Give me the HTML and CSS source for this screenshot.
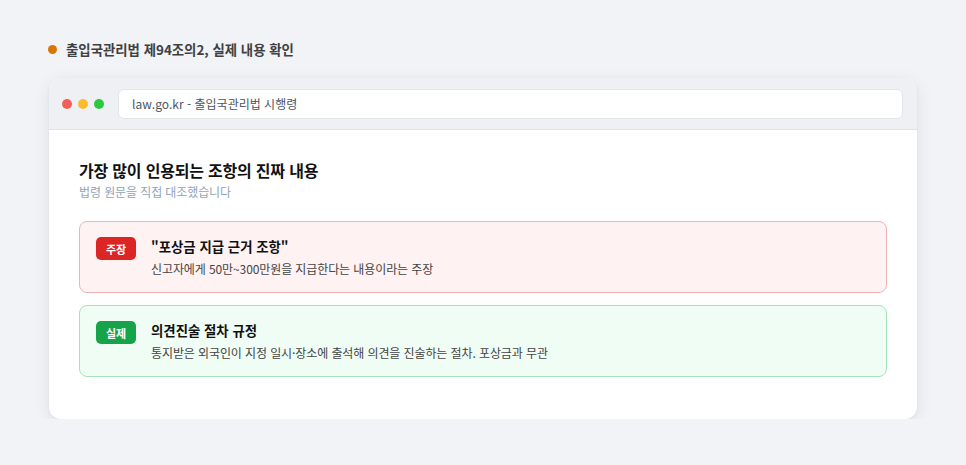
FILE: index.html
```html
<!DOCTYPE html>
<html lang="ko">
<head>
    <meta charset="UTF-8">
    <meta name="viewport" content="width=device-width, initial-scale=1.0">
    <title>출입국관리법 제94조의2</title>
    <link rel="stylesheet" href="styles.css">
</head>
<body>
    <div class="pagina">
        <div class="rotulo">
            <span class="ponto"></span>
            <span>출입국관리법 제94조의2, 실제 내용 확인</span>
        </div>

        <div class="janela">
            <div class="barra">
                <div class="luzes">
                    <span class="luz vermelha"></span>
                    <span class="luz amarela"></span>
                    <span class="luz verde"></span>
                </div>
                <div class="endereco">law.go.kr - 출입국관리법 시행령</div>
            </div>

            <div class="conteudo">
                <h1 class="titulo">가장 많이 인용되는 조항의 진짜 내용</h1>
                <p class="subtitulo">법령 원문을 직접 대조했습니다</p>

                <div class="cartao falso">
                    <span class="selo">주장</span>
                    <div>
                        <div class="cartaoTitulo">"포상금 지급 근거 조항"</div>
                        <div class="cartaoTexto">신고자에게 50만~300만원을 지급한다는 내용이라는 주장</div>
                    </div>
                </div>

                <div class="cartao real">
                    <span class="selo">실제</span>
                    <div>
                        <div class="cartaoTitulo">의견진술 절차 규정</div>
                        <div class="cartaoTexto">통지받은 외국인이 지정 일시·장소에 출석해 의견을 진술하는 절차. 포상금과 무관</div>
                    </div>
                </div>
            </div>
        </div>
    </div>
</body>
</html>
```

FILE: styles.css
```css
* {
    box-sizing: border-box;
}
body {
    margin: 0;
    background: #f1f3f6;
    font-family: "Noto Sans CJK KR", "Noto Sans", sans-serif;
    color: #111;
}
.pagina {
    padding: 38px 49px 0 49px;
    width: 966px;
}
.rotulo {
    display: flex;
    align-items: center;
    gap: 9px;
    font-size: 13.4px;
    font-weight: 700;
    color: #404040;
    height: 22px;
}
.ponto {
    width: 9px;
    height: 9px;
    border-radius: 50%;
    background: #d97706;
    margin-left: -1px;
}
.janela {
    margin-top: 18px;
    width: 868px;
    background: #fff;
    border-radius: 12px;
    overflow: hidden;
    box-shadow: 0 4px 18px rgba(30, 40, 60, 0.08), 0 1px 3px rgba(30, 40, 60, 0.06);
}
.barra {
    display: flex;
    align-items: center;
    height: 52px;
    padding: 0 14px 0 13px;
    background: #eef0f3;
    border-bottom: 1px solid #e1e4e8;
}
.luzes {
    display: flex;
    gap: 6px;
    margin-right: 14px;
}
.luz {
    width: 10px;
    height: 10px;
    border-radius: 50%;
}
.vermelha { background: #f25f58; }
.amarela { background: #fbbd2e; }
.verde { background: #2dc840; }
.endereco {
    flex: 1;
    height: 30px;
    background: #fff;
    border: 1px solid #e2e5e9;
    border-radius: 6px;
    padding: 0 13px;
    display: flex;
    align-items: center;
    font-size: 12px;
    color: #4b5563;
}
.conteudo {
    padding: 28px 30px 42px 30px;
}
.titulo {
    margin: 0;
    font-size: 16px;
    font-weight: 700;
    letter-spacing: -0.2px;
    color: #111;
    line-height: 24px;
}
.subtitulo {
    margin: 1px 0 20px 0;
    font-size: 12px;
    letter-spacing: -0.1px;
    color: #94a3b8;
    line-height: 18px;
}
.cartao {
    display: flex;
    align-items: flex-start;
    gap: 15px;
    height: 72px;
    padding: 14px 16px;
    border-radius: 8px;
    border: 1px solid;
    margin-bottom: 12px;
}
.cartao:last-child {
    margin-bottom: 0;
}
.falso {
    background: #fef2f2;
    border-color: #efb3b3;
}
.real {
    background: #f0fdf4;
    border-color: #a3e4b6;
}
.selo {
    display: inline-flex;
    align-items: center;
    justify-content: center;
    width: 40px;
    height: 23px;
    border-radius: 5px;
    color: #fff;
    font-size: 11px;
    font-weight: 700;
    margin-top: 1px;
}
.falso .selo { background: #dc2626; }
.real .selo { background: #16a34a; }
.cartaoTitulo {
    font-size: 13.4px;
    font-weight: 700;
    line-height: 20px;
    color: #111;
}
.cartaoTexto {
    margin-top: 4px;
    font-size: 12px;
    letter-spacing: -0.1px;
    line-height: 18px;
    color: #444;
}
```
